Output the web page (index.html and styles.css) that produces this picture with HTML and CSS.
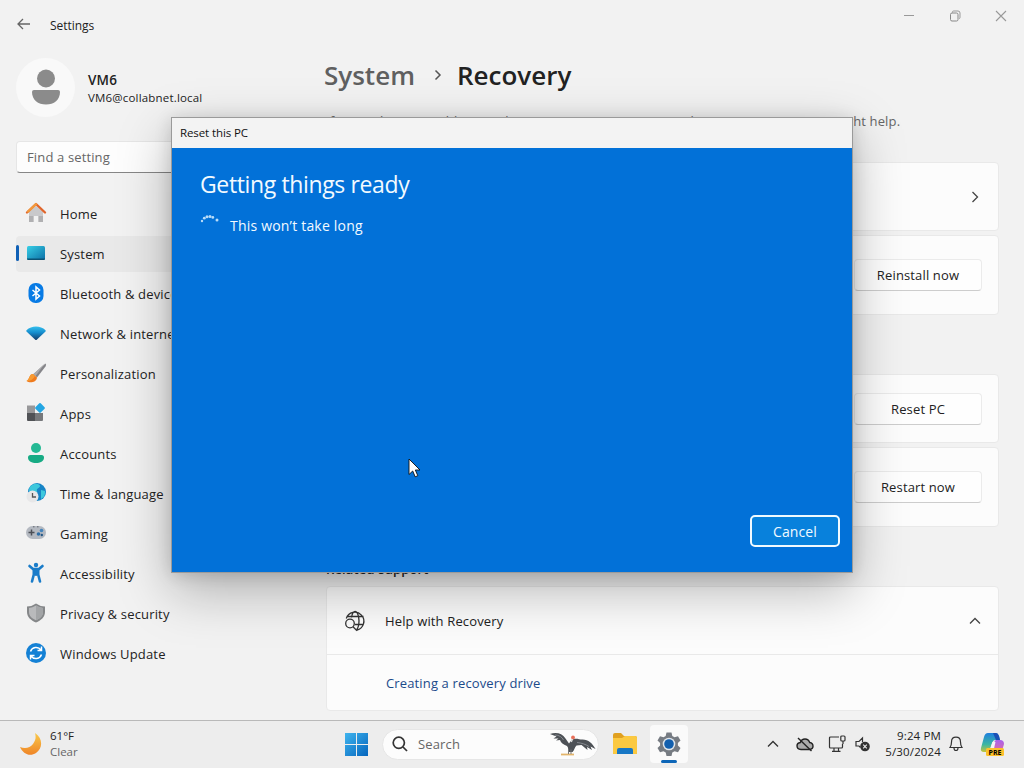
FILE: index.html
```html
<!DOCTYPE html>
<html lang="en">
<head>
  <meta charset="utf-8">
  <title>Settings</title>
  <link rel="stylesheet" href="styles.css">
</head>
<body>
  <div class="desktop">
    <div class="window">
      <header class="titlebar">
        <svg class="back" width="14" height="12" viewBox="0 0 14 12"><path d="M6 1 1 6l5 5M1 6h12" fill="none" stroke="#666" stroke-width="1.3"/></svg>
        <span class="app-name">Settings</span>
        <div class="controls">
          <svg width="12" height="12" viewBox="0 0 12 12"><path d="M1 5.5h10" stroke="#999"/></svg>
          <svg width="12" height="12" viewBox="0 0 12 12"><path d="M3.5 2.5v-.5q0-1 1-1H9q2 0 2 2v4.500q0 1-1 1" fill="none" stroke="#999"/><rect x="1.500" y="3" width="7.500" height="8" rx="1.500" fill="none" stroke="#888"/></svg>
          <svg width="12" height="12" viewBox="0 0 12 12"><path d="m1 1 10 10M11 1 1 11" stroke="#999" stroke-width="1.100"/></svg>
        </div>
      </header>

      <div class="main">
        <aside class="sidebar">
          <div class="account">
            <div class="avatar">
              <svg width="30" height="36" viewBox="0 0 30 36" fill="#8b8b8b"><circle cx="15" cy="9.500" r="9"/><path d="M3 21h24q2 0 2 2c0 8-6 12.500-14 12.500S1 31 1 23q0-2 2-2z"/></svg>
            </div>
            <div class="who">
              <b>VM6</b>
              <span>VM6@collabnet.local</span>
            </div>
          </div>
          <div class="find">Find a setting</div>

          <nav class="nav">
            <a class="item">
              <svg width="22" height="22" viewBox="0 0 22 22"><path d="M4 9.500 11 4l7 5.500V20h-4.500v-6h-5v6H4z" fill="#c9c9cb"/><path d="M4 14h4.500v6H4zM13.500 14H18v6h-4.500z" fill="#b0b0b2"/><path d="M2 10.500 11 2l9 8.500" fill="none" stroke="#e0652b" stroke-width="2.400" stroke-linecap="round" stroke-linejoin="round"/><path d="m3 9.600 8-7.500" stroke="#f2993c" stroke-width="2.200" stroke-linecap="round"/></svg>
              <span>Home</span>
            </a>
            <a class="item active">
              <svg width="22" height="22" viewBox="0 0 22 22"><defs><linearGradient id="screen" x1="0" y1="0" x2="1" y2="1"><stop offset="0" stop-color="#37cfe6"/><stop offset="1" stop-color="#0c6fa6"/></linearGradient></defs><rect x="2" y="4" width="18" height="14" rx="1.500" fill="url(#screen)"/><path d="M2 16.500h18q0 1.500-1.500 1.500h-15Q2 18 2 16.500z" fill="#0b5274"/></svg>
              <span>System</span>
            </a>
            <a class="item">
              <svg width="22" height="22" viewBox="0 0 22 22"><rect x="3.500" y="1" width="15" height="20" rx="7" fill="#087be5"/><path d="m7.500 8 7 6-3.500 3V5l3.500 3-7 6" fill="none" stroke="#fff" stroke-width="1.500"/></svg>
              <span>Bluetooth &amp; devices</span>
            </a>
            <a class="item">
              <svg width="22" height="22" viewBox="0 0 22 22"><defs><linearGradient id="wifi" x1="0" y1="0" x2="0" y2="1"><stop offset="0" stop-color="#35c0ee"/><stop offset=".45" stop-color="#168dce"/><stop offset="1" stop-color="#153d6b"/></linearGradient></defs><path d="M1.500 8.200c5-5 14-5 19 0q.6.700 0 1.400L12 17.500q-1 1-2 0L1.500 9.600q-.6-.7 0-1.400z" fill="url(#wifi)"/></svg>
              <span>Network &amp; internet</span>
            </a>
            <a class="item">
              <svg width="22" height="22" viewBox="0 0 22 22"><path d="M20.500 1.500q1.200 1 0 3L12 15.500 8.500 12z" fill="#858589"/><path d="M20 1.300 8 12.500l2.400 1.700z" fill="#ababae"/><path d="M8 12c-4 0-3 5-6.500 7 3 2.500 10 1.500 10.500-3.500z" fill="#ef7b1d"/><path d="M8 12c-4 0-3 5-6.500 7 3 .5 7-1.500 8.500-5z" fill="#f79b33"/></svg>
              <span>Personalization</span>
            </a>
            <a class="item">
              <svg width="22" height="22" viewBox="0 0 22 22"><path d="M2 3.500h8V11H2z" fill="#98989a"/><path d="M2 11h8v8H3q-1 0-1-1z" fill="#505256"/><path d="M10 11h8v7q0 1-1 1h-7z" fill="#77797c"/><rect x="11.200" y="2.200" width="7.500" height="7.500" rx="1" transform="rotate(45 15 6)" fill="#24a6e3"/></svg>
              <span>Apps</span>
            </a>
            <a class="item">
              <svg width="22" height="22" viewBox="0 0 22 22"><circle cx="11" cy="6" r="5" fill="#24b994"/><path d="M5.500 13h11q2.500 0 2.500 2.500c0 4-4 5.500-8 5.500s-8-1.500-8-5.500Q3 13 5.500 13z" fill="#17ab84"/></svg>
              <span>Accounts</span>
            </a>
            <a class="item">
              <svg width="22" height="22" viewBox="0 0 22 22"><circle cx="12" cy="10" r="9" fill="#1784c6"/><path d="M7 3c4-2.500 8-1 8 1s-4 2-3 5-4 2-8 0c0-3 1-5 3-6zM16 8l4 1q1 5-4 8z" fill="#3dc8dc"/><circle cx="7.500" cy="14.500" r="6" fill="#e7e7e8"/><path d="M7.500 11v4H11" fill="none" stroke="#555" stroke-width="1.300"/></svg>
              <span>Time &amp; language</span>
            </a>
            <a class="item">
              <svg width="22" height="22" viewBox="0 0 22 22"><rect x="1" y="4" width="20" height="13" rx="6.500" fill="#b4b9c1"/><path d="M6.500 7.500v6M3.500 10.500h6" stroke="#4b4f56" stroke-width="1.500"/><circle cx="13.500" cy="12" r="1.800" fill="#2f6fa8"/><circle cx="16.500" cy="8.500" r="1.800" fill="#4583ba"/><circle cx="16.800" cy="13" r="1.200" fill="#245886"/><path d="M8 4.800h1.500M12 4.800h1.500" stroke="#62666d"/></svg>
              <span>Gaming</span>
            </a>
            <a class="item">
              <svg width="22" height="22" viewBox="0 0 22 22" fill="none" stroke="#1a7cc9" stroke-linecap="round" stroke-linejoin="round"><circle cx="11" cy="3" r="2.200" fill="#1a7cc9" stroke="none"/><path d="m4.500 4 3.500 3h6l3.500-3" stroke-width="2.600"/><path d="M8.800 7.500v5L7 19.500M13.200 7.500v5l1.800 7" stroke-width="2.600"/><path d="M11 8v4" stroke-width="4"/></svg>
              <span>Accessibility</span>
            </a>
            <a class="item">
              <svg width="22" height="22" viewBox="0 0 22 22"><path d="M11 1.500q4 3 9 3V10c0 5-4 8.500-9 10.500C6 18.500 2 15 2 10V4.500q5 0 9-3z" fill="#858789"/><path d="M11 3.500q3.500 2.200 7 2.500v4c0 4-3 6.500-7 8.300C7 16.500 4 14 4 10V6q3.500-.3 7-2.500z" fill="#b9babc"/><path d="M11 3.500q3.500 2.200 7 2.500v4c0 4-3 6.500-7 8.300z" fill="#a3a5a7"/></svg>
              <span>Privacy &amp; security</span>
            </a>
            <a class="item">
              <svg width="22" height="22" viewBox="0 0 22 22"><circle cx="11" cy="11" r="10" fill="#1481d5"/><path d="M5.500 9.500C7 5 13 4 16 8M16.500 4.500V8.500H12.500M16.500 12.500C15 17 9 18 6 14M5.500 17.500V13.500H9.500" fill="none" stroke="#fff" stroke-width="1.500"/></svg>
              <span>Windows Update</span>
            </a>
          </nav>
        </aside>

        <main class="content">
          <h1 class="crumbs">
            <span class="parent">System</span>
            <svg width="8" height="12" viewBox="0 0 8 12"><path d="m1.500 1.500 4.500 4.500-4.500 4.500" fill="none" stroke="#555" stroke-width="1.500"/></svg>
            <span>Recovery</span>
          </h1>
          <p class="intro">If you're having problems with your PC or want to reset it, these recovery options might help.</p>

          <section class="group">
            <div class="card">
              <svg class="chevron" width="8" height="12" viewBox="0 0 8 12"><path d="m1.500 1 5 5-5 5" fill="none" stroke="#444" stroke-width="1.300"/></svg>
            </div>
            <div class="card tall"><button class="btn">Reinstall now</button></div>
          </section>

          <section class="group options">
            <div class="card"><button class="btn">Reset PC</button></div>
            <div class="card tall"><button class="btn">Restart now</button></div>
          </section>

          <h2 class="related">Related support</h2>
          <section class="help">
            <div class="help-head">
              <svg width="22" height="22" viewBox="0 0 22 22" fill="none" stroke="#333" stroke-width="1.300"><path d="M2.300 8.500A9 9 0 1 1 13 20M3.500 6.500h16M11 14.500h8.500M7.500 7.500C8 4 9.500 1.500 11.200 1.500c2 0 3.800 4 3.800 9.200 0 4-1 7.500-2.500 9"/><circle cx="6" cy="13.500" r="4.300"/><path d="m9 16.700 4 4"/></svg>
              <span>Help with Recovery</span>
              <svg class="chevron" width="12" height="8" viewBox="0 0 12 8"><path d="m1 6.500 5-5 5 5" fill="none" stroke="#444" stroke-width="1.300"/></svg>
            </div>
            <a class="help-link">Creating a recovery drive</a>
          </section>
        </main>
      </div>
    </div>

    <footer class="taskbar">
      <div class="weather">
        <svg width="24" height="24" viewBox="0 0 24 24"><defs><linearGradient id="moon" x1="0" y1="0" x2="0" y2="1"><stop offset="0" stop-color="#f9c94a"/><stop offset="1" stop-color="#ef8527"/></linearGradient></defs><path d="M16 1c8 5 8 15 1 20C11 25 4 22 1 15c5 2 10 1 13-3s3-7 2-11z" fill="url(#moon)"/></svg>
        <div class="stack"><span>61°F</span><span class="muted">Clear</span></div>
      </div>

      <div class="apps">
        <svg class="start" width="23" height="23" viewBox="0 0 23 23"><defs><linearGradient id="win" x1="0" y1="0" x2="1" y2="1"><stop offset="0" stop-color="#3fb4ee"/><stop offset="1" stop-color="#0565bd"/></linearGradient></defs><path d="M0 0h11v11H0zM12 0h11v11H12zM0 12h11v11H0zM12 12h11v11H12z" fill="url(#win)"/></svg>
        <div class="search">
          <svg width="16" height="16" viewBox="0 0 16 16"><circle cx="6.800" cy="6.800" r="5.600" fill="none" stroke="#333" stroke-width="1.700"/><path d="m11 11 4 4" stroke="#333" stroke-width="1.700"/></svg>
          <span>Search</span>
          <svg class="bird" width="48" height="26" viewBox="0 0 48 26"><path d="M1 3c6-2 12-1 15.500 4.500l3.500 5 2.500-3.500c4-2.500 7-.5 11-.5 6 0 10 4 13 9.500l-5-2.500 1.500 3.500-5-3 .5 3-6-5-5 .5c-2 1.500-2 5-4 6.500H20c-1.500-2 0-4-2-6-4-1.500-6-3-7-6l-4 .5 2.500-2-5 0 3-2z" fill="#4d5156"/><path d="M6 4c4 0 7 2 8.500 5M28 11.500c5 .5 9 2 12 4" fill="none" stroke="#85898f"/><circle cx="24" cy="6.500" r="1.900" fill="#e8705a"/><path d="m23.500 8-1.300 3" stroke="#ddd" stroke-width="1.500"/><path d="M12 23.500h13" stroke="#e3b56c" stroke-width="1.800"/><path d="M19.500 18.500v4.500M22 18.500v4.500" stroke="#777"/></svg>
        </div>
        <svg class="folder" width="26" height="24" viewBox="0 0 26 24"><path d="M1 3q0-2 2-2h6l3 3h11q2 0 2 2v15q0 1-1 1H2q-1 0-1-1z" fill="#e0a020"/><path d="M1 6h9l3-2h10q2 0 2 2v15q0 1-1 1H2q-1 0-1-1z" fill="#fbc941"/><path d="M5 22v-4q0-2 2-2h12q2 0 2 2v4z" fill="#1777c5"/></svg>
        <div class="running">
          <svg width="26" height="26" viewBox="0 0 26 26"><path d="m10.500 1.500 5 0 .8 3.500 2.200 1.300 3.500-1 2.500 4.300-2.600 2.400v2.500l2.600 2.400-2.500 4.300-3.500-1-2.200 1.300-.8 3.500h-5l-.8-3.500-2.200-1.300-3.500 1-2.500-4.300 2.600-2.400V12L1.500 9.600 4 5.300l3.500 1L9.700 5z" fill="#767b82"/><circle cx="13" cy="13" r="6.300" fill="#dfe5ea"/><circle cx="13" cy="13" r="4.800" fill="#125fae"/></svg>
          <i class="pill"></i>
        </div>
      </div>

      <div class="tray">
        <svg width="12" height="8" viewBox="0 0 12 8"><path d="m1 6.500 5-5 5 5" fill="none" stroke="#333" stroke-width="1.300"/></svg>
        <svg class="cloud" width="18" height="16" viewBox="0 0 18 16"><path d="M5 13.500q-4-.2-4-3.700 0-3 3.300-3.300Q5.500 3 9 3t4.700 3.500Q17 7 17 10.200q0 3-3.500 3.300z" fill="#aaa" stroke="#222" stroke-width="1.400"/><path d="m2 2 13.500 13" stroke="#222" stroke-width="1.400"/></svg>
        <svg class="net" width="18" height="18" viewBox="0 0 18 18" fill="none" stroke="#333" stroke-width="1.200"><path d="M11 2H2.500Q1.500 2 1.500 3v9q0 1 1 1h11q1 0 1-1V9M6 13v3M10.500 13v3M4 16.400h8.500M15 6v3"/><rect x="12.800" y="1" width="4.200" height="5" rx="1"/></svg>
        <svg class="vol" width="15" height="16" viewBox="0 0 15 16"><path d="M5.500 11.500 4 10H1V5.500h3L7.500 2v4" fill="none" stroke="#333" stroke-width="1.200"/><circle cx="10" cy="10.500" r="4.800" fill="#333"/><path d="m8.200 8.700 3.600 3.600M11.800 8.700l-3.600 3.600" stroke="#eee" stroke-width="1.100"/></svg>
        <div class="stack clock"><span>9:24 PM</span><span>5/30/2024</span></div>
        <svg class="bell" width="14" height="16" viewBox="0 0 14 16"><path d="M1 11.500q1.500-2 1.500-5.500Q2.500 1.200 7 1.200T11.500 6q0 3.500 1.500 5.500zM5 12q0 2.500 2 2.500T9 12" fill="none" stroke="#333" stroke-width="1.200"/></svg>
        <svg class="copilot" width="25" height="25" viewBox="0 0 25 25"><defs><linearGradient id="cpa" x1="0" y1="0" x2="0" y2="1"><stop offset="0" stop-color="#1f7fdf"/><stop offset=".6" stop-color="#3bb6a2"/><stop offset="1" stop-color="#c3c63b"/></linearGradient><linearGradient id="cpb" x1="0" y1="0" x2="0" y2="1"><stop offset="0" stop-color="#a862ee"/><stop offset="1" stop-color="#f0708b"/></linearGradient></defs><path d="M8 1h8q2 0 3 3l1 4h-5q-2 0-3 3l-2 6q-1 3-4 3H4q-4 0-3-4L4 5q1-4 4-4z" fill="url(#cpa)"/><path d="M13 1h3q2 0 3 3l1 4h-4z" fill="#1b50b5"/><path d="M16 8h4q4 0 4 4l-2 7q-1 4-4 4H9q3-1 4-5l1-7q1-3 2-3z" fill="url(#cpb)"/><path d="m12.500 10-2 6.500h3.500l1.500-6.500z" fill="#f4f4f6"/><rect x="6" y="16" width="18" height="8" rx="1.500" fill="#fdc12b"/><text x="15" y="22.600" class="pre">PRE</text></svg>
      </div>
    </footer>

    <div class="dialog">
      <div class="dialog-title">Reset this PC</div>
      <div class="dialog-body">
        <h2>Getting things ready</h2>
        <div class="progress">
          <svg width="20" height="20" viewBox="0 0 20 20" fill="#b9dcf8"><circle cx="2" cy="6" r="1.200"/><circle cx="4.300" cy="3.200" r="1.400"/><circle cx="7" cy="1.800" r="1.500"/><circle cx="10" cy="1.600" r="1.500"/><circle cx="12.800" cy="2.400" r="1.400"/><circle cx="17" cy="5" r="1.500"/></svg>
          <span>This won’t take long</span>
        </div>
        <button class="cancel">Cancel</button>
      </div>
    </div>

    <svg class="cursor" width="13" height="20" viewBox="0 0 13 20"><path d="M1 1v15.500l3.700-3.500 2.500 5.800 2.600-1.100-2.500-5.700H12z" fill="#fff" stroke="#111" stroke-width=".9"/></svg>
  </div>
</body>
</html>
```
FILE: styles.css
```css
* {
  box-sizing: border-box;
}
body {
  margin: 0;
  font-family: "Open Sans", "Noto Sans", sans-serif;
  font-size: 13px;
  letter-spacing: 0.14px;
  color: #222;
}
h1, h2, p {
  margin: 0;
}
svg {
  display: block;
  flex: none;
}
button {
  font: inherit;
  letter-spacing: inherit;
  color: inherit;
}
.desktop {
  position: relative;
  width: 1024px;
  height: 768px;
  overflow: hidden;
  display: flex;
  flex-direction: column;
  background: #f2f2f2;
  white-space: nowrap;
}
.window {
  height: 720px;
}

/* title bar */
.titlebar {
  display: flex;
  align-items: center;
  height: 48px;
  padding: 0 17px;
}
.app-name {
  margin-left: 19px;
  padding-top: 2px;
  font-size: 12px;
  letter-spacing: -0.05px;
}
.controls {
  display: flex;
  gap: 34px;
  margin-left: auto;
  padding-bottom: 16px;
}

.main {
  display: flex;
  height: 672px;
}

/* sidebar */
.sidebar {
  width: 310px;
  padding: 10px 0 0 16px;
}
.account {
  display: flex;
  align-items: center;
  gap: 13px;
  height: 58px;
}
.avatar {
  display: flex;
  align-items: center;
  justify-content: center;
  width: 59px;
  height: 59px;
  border-radius: 50%;
  background: #f9f9f9;
}
.who {
  display: flex;
  flex-direction: column;
  font-size: 11.5px;
  letter-spacing: 0.18px;
  line-height: 18px;
  padding-top: 4px;
}
.who b {
  font-size: 13.5px;
  font-weight: 600;
}
.find {
  width: 282px;
  height: 32px;
  margin-top: 25px;
  padding-left: 10px;
  border: 1px solid #e6e6e6;
  border-bottom-color: #868686;
  border-radius: 4px;
  background: #fdfdfd;
  color: #666;
  line-height: 31px;
}
.nav {
  display: flex;
  flex-direction: column;
  gap: 4px;
  margin-top: 23px;
}
.item {
  position: relative;
  display: flex;
  align-items: center;
  gap: 13px;
  width: 282px;
  height: 36px;
  padding-left: 9px;
  border-radius: 4px;
  letter-spacing: 0.17px;
}
.item svg {
  margin-bottom: 2px;
}
.item.active {
  background: #e9e9e9;
}
.item.active::before {
  content: "";
  position: absolute;
  left: 0;
  top: 9px;
  width: 3px;
  height: 16px;
  border-radius: 2px;
  background: #0f60b6;
}

/* content */
.content {
  width: 673px;
  margin-left: 16px;
}
.crumbs {
  display: flex;
  align-items: center;
  height: 54px;
  margin-left: -2px;
  font-size: 26px;
  font-weight: 600;
  letter-spacing: 0;
}
.crumbs svg {
  margin: 0 15px 0 19px;
}
.parent {
  color: #606060;
}
.intro {
  height: 38px;
  line-height: 38px;
  color: #666;
}
.group {
  display: flex;
  flex-direction: column;
  gap: 4px;
  margin-top: 22px;
}
.group.options {
  margin-top: 59px;
}
.card {
  display: flex;
  align-items: center;
  justify-content: flex-end;
  height: 69px;
  padding-right: 16px;
  border: 1px solid #e9e9e9;
  border-radius: 4px;
  background: #fcfcfc;
}
.card.tall {
  height: 80px;
}
.card .chevron {
  margin-right: 3px;
}
.btn {
  width: 128px;
  height: 32px;
  padding: 0;
  border: 1px solid #ebebeb;
  border-bottom-color: #cdcdcd;
  border-radius: 4px;
  background: #fefefe;
}
.related {
  height: 20px;
  margin-top: 32px;
  font-size: 13px;
  font-weight: 600;
  line-height: 20px;
}
.help {
  height: 125px;
  margin-top: 7px;
  border: 1px solid #e9e9e9;
  border-radius: 4px;
  background: #fcfcfc;
}
.help-head {
  display: flex;
  align-items: center;
  height: 68px;
  padding: 0 17px;
  border-bottom: 1px solid #e9e9e9;
}
.help-head span {
  margin-left: 19px;
}
.help-head .chevron {
  margin-left: auto;
}
.help-link {
  display: block;
  padding-left: 59px;
  color: #1b4a8a;
  line-height: 56px;
}

/* taskbar */
.taskbar {
  display: flex;
  align-items: center;
  height: 48px;
  padding-bottom: 1px;
  border-top: 1px solid #b9b9b9;
  background: #ededed;
  font-size: 11.5px;
}
.weather {
  display: flex;
  align-items: center;
  gap: 7px;
  width: 345px;
  padding-left: 19px;
}
.stack {
  display: flex;
  flex-direction: column;
  line-height: 16px;
}
.weather .stack {
  letter-spacing: 0;
}
.muted {
  color: #666;
}
.apps {
  display: flex;
  align-items: center;
}
.search {
  display: flex;
  align-items: center;
  width: 217px;
  height: 31px;
  margin-left: 14px;
  padding: 0 1px 0 9px;
  border: 1px solid #e6e6e6;
  border-radius: 16px;
  background: #fcfcfc;
  color: #666;
  font-size: 13px;
}
.search span {
  margin-left: 10px;
}
.bird {
  margin-left: auto;
}
.folder {
  margin-left: 13px;
}
.running {
  position: relative;
  display: flex;
  align-items: center;
  justify-content: center;
  width: 38px;
  height: 38px;
  margin-left: 12px;
  border-radius: 4px;
  background: #fafafa;
}
.pill {
  position: absolute;
  left: 11px;
  bottom: 0;
  width: 16px;
  height: 3px;
  border-radius: 2px;
  background: #0d66b8;
}
.tray {
  display: flex;
  align-items: center;
  margin-left: auto;
  padding-right: 19px;
}
.cloud {
  margin-left: 17px;
}
.net {
  margin-left: 14px;
}
.vol {
  margin-left: 9px;
}
.clock {
  width: 58px;
  margin-left: 13px;
  align-items: flex-end;
}
.bell {
  margin-left: 8px;
}
.copilot {
  margin-left: 17px;
}
.pre {
  font-size: 7px;
  font-weight: 700;
  letter-spacing: 0;
  text-anchor: middle;
}

/* dialog */
.dialog {
  position: absolute;
  left: 171px;
  top: 117px;
  width: 682px;
  height: 456px;
  border: 1px solid #9a9a9a;
  background: #0271d8;
  box-shadow: 0 18px 50px rgba(0, 0, 0, .28), 0 2px 16px rgba(0, 0, 0, .14);
}
.dialog-title {
  height: 30px;
  padding-left: 8px;
  background: #f3f3f3;
  color: #111;
  font-size: 11.5px;
  letter-spacing: -0.1px;
  line-height: 29px;
}
.dialog-body {
  display: flex;
  flex-direction: column;
  height: 424px;
  padding: 19px 12px 25px 28px;
  color: #f2faff;
}
.dialog-body h2 {
  font-size: 23px;
  font-weight: 400;
  letter-spacing: -0.37px;
  line-height: 34px;
}
.progress {
  display: flex;
  align-items: center;
  gap: 10px;
  height: 24px;
  margin-top: 12px;
  font-size: 14px;
  letter-spacing: 0.2px;
}
.cancel {
  align-self: flex-end;
  width: 90px;
  height: 32px;
  margin-top: auto;
  border: 2px solid #f0faff;
  border-radius: 5px;
  background: #0881dc;
  font-size: 14px;
}
.cursor {
  position: absolute;
  left: 408px;
  top: 458px;
}
```
